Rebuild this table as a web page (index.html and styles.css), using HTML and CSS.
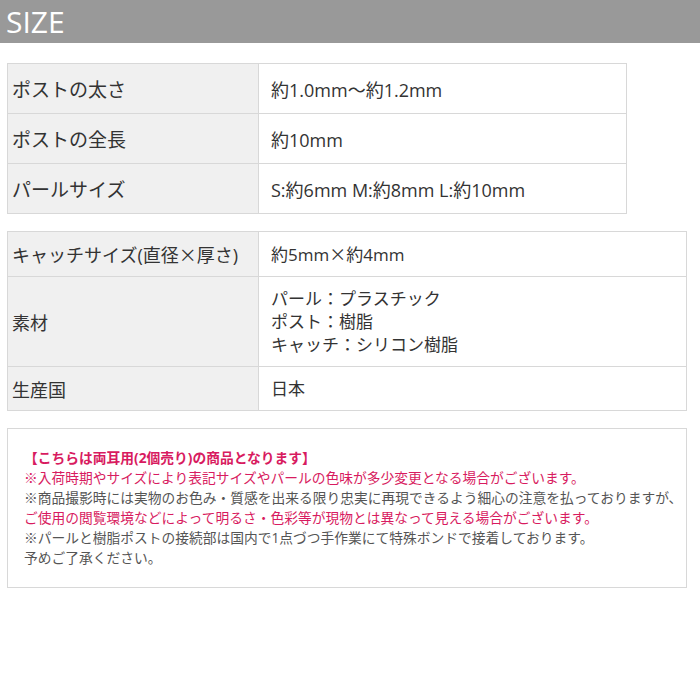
FILE: index.html
```html
<!DOCTYPE html>
<html lang="ja">
<head>
    <meta charset="UTF-8">
    <meta name="viewport" content="width=device-width, initial-scale=1.0">
    <title>SIZE</title>
    <link rel="stylesheet" href="styles.css">
</head>
<body>
    <h1 class="title">SIZE</h1>

    <div class="content">
        <table class="spec spec-main">
            <tr>
                <th>ポストの太さ</th>
                <td>約1.0mm～約1.2mm</td>
            </tr>
            <tr>
                <th>ポストの全長</th>
                <td>約10mm</td>
            </tr>
            <tr>
                <th>パールサイズ</th>
                <td>S:約6mm M:約8mm L:約10mm</td>
            </tr>
        </table>

        <table class="spec spec-sub">
            <tr class="row-catch">
                <th>キャッチサイズ(直径<span class="jp">×</span>厚さ)</th>
                <td>約5mm<span class="jp">×</span>約4mm</td>
            </tr>
            <tr class="row-material">
                <th>素材</th>
                <td>パール：プラスチック<br>ポスト：樹脂<br>キャッチ：シリコン樹脂</td>
            </tr>
            <tr class="row-origin">
                <th>生産国</th>
                <td>日本</td>
            </tr>
        </table>

        <div class="notes">
            <p class="accent">【こちらは両耳用(2個売り)の商品となります】</p>
            <p class="accent">※入荷時期やサイズにより表記サイズやパールの色味が多少変更となる場合がございます。</p>
            <p>※商品撮影時には実物のお色み・質感を出来る限り忠実に再現できるよう細心の注意を払っておりますが、</p>
            <p class="accent">ご使用の閲覧環境などによって明るさ・色彩等が現物とは異なって見える場合がございます。</p>
            <p>※パールと樹脂ポストの接続部は国内で1点づつ手作業にて特殊ボンドで接着しております。</p>
            <p>予めご了承ください。</p>
        </div>
    </div>
</body>
</html>
```

FILE: styles.css
```css
body {
    margin: 0;
    background-color: #fff;
    color: #333;
    font-family: "Open Sans", "Noto Sans CJK JP", sans-serif;
}

.jp {
    font-family: "Noto Sans CJK JP", sans-serif;
}

.title {
    margin: 0;
    height: 43px;
    padding-left: 6px;
    background-color: #999;
    color: #fff;
    font-size: 30px;
    font-weight: normal;
    line-height: 43px;
}

.content {
    padding: 0 7px;
}

.spec {
    border-collapse: collapse;
    table-layout: fixed;
}

.spec th,
.spec td {
    border: 1px solid #d8d8d8;
    text-align: left;
    vertical-align: middle;
    font-weight: normal;
}

.spec th {
    width: 251px;
    padding: 0 0 0 4px;
    background-color: #f0f0f0;
    box-sizing: border-box;
}

.spec td {
    padding: 0 0 0 12px;
    background-color: #fff;
}

.spec-main {
    width: 620px;
    margin-top: 20px;
}

.spec-main th {
    height: 50px;
    font-size: 19px;
}

.spec-main td {
    font-size: 18px;
}

.spec-sub {
    width: 680px;
    margin-top: 17px;
}

.spec-sub th {
    font-size: 18px;
}

.spec-sub td {
    font-size: 17px;
    line-height: 23px;
}

.row-catch th {
    height: 45px;
}

.row-material th {
    height: 90px;
}

.row-origin th {
    height: 44px;
}

.notes {
    margin-top: 17px;
    width: 680px;
    box-sizing: border-box;
    padding: 19px 18px 19px 16px;
    border: 1px solid #d8d8d8;
    font-size: 13.75px;
    line-height: 20px;
    color: #555;
}

.notes p {
    margin: 0;
    white-space: nowrap;
}

.notes .accent {
    color: #d81b60;
}

.notes .accent:first-child {
    font-weight: bold;
}
```
